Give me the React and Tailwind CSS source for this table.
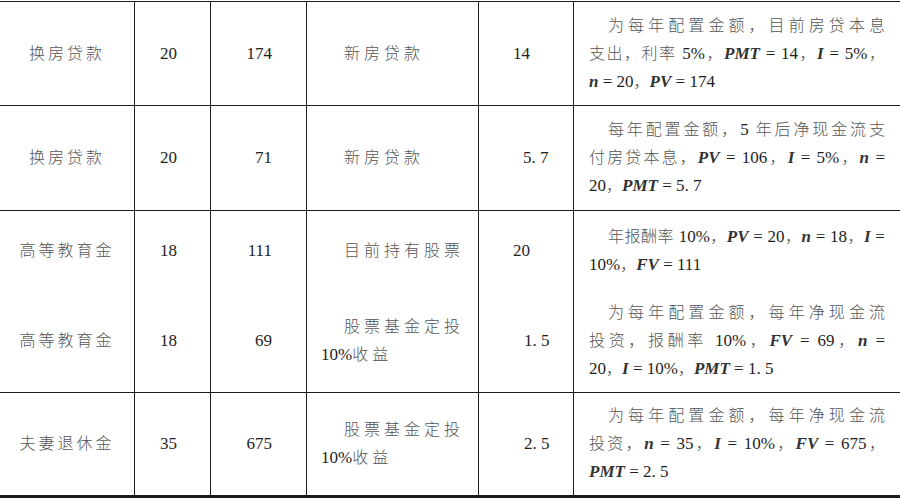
const rows = [
  {
    h: 'h-[104px]', top: true,
    name: '换房贷款', years: '20', target: '174',
    tool: ['新房贷款'], amount: '14', amountPad: 'pl-[34px]',
    note: ['为每年配置金额，目前房贷本息', '支出，利率 5%，*PMT* = 14，*I* = 5%，', '*n* = 20，*PV* = 174'],
  },
  {
    h: 'h-[105px]', top: true,
    name: '换房贷款', years: '20', target: '71',
    tool: ['新房贷款'], amount: '5. 7', amountPad: 'pl-[44px]',
    note: ['每年配置金额，5 年后净现金流支', '付房贷本息，*PV* = 106，*I* = 5%，*n* =', '20，*PMT* = 5. 7'],
  },
  {
    h: 'h-[80px]', top: true,
    name: '高等教育金', years: '18', target: '111',
    tool: ['目前持有股票'], amount: '20', amountPad: 'pl-[34px]',
    note: ['年报酬率 10%，*PV* = 20，*n* = 18，*I* =', '10%，*FV* = 111'],
  },
  {
    h: 'h-[102px]', top: false,
    name: '高等教育金', years: '18', target: '69',
    tool: ['股票基金定投', '10%收益'], amount: '1. 5', amountPad: 'pl-[45px]',
    note: ['为每年配置金额，每年净现金流', '投资，报酬率 10%，*FV* = 69，*n* =', '20，*I* = 10%，*PMT* = 1. 5'],
  },
  {
    h: 'h-[103px]', top: true,
    name: '夫妻退休金', years: '35', target: '675',
    tool: ['股票基金定投', '10%收益'], amount: '2. 5', amountPad: 'pl-[45px]',
    note: ['为每年配置金额，每年净现金流', '投资，*n* = 35，*I* = 10%，*FV* = 675，', '*PMT* = 2. 5'],
  },
]

// split a plain run into CJK / latin spans
function Runs({ text, cjk }) {
  return text.split(/([\u3000-\u303f\u4e00-\u9fff\uff00-\uffef]+)/).map((p, i) =>
    i % 2
      ? <span key={i} className={`text-[16px] font-light text-[#555] ${cjk}`}>{p}</span>
      : <span key={i} className="text-[17px] text-[#1e1e1e]">{p}</span>
  )
}

// *x* marks an italic variable
function Rich({ text, cjk = '' }) {
  return text.split('*').map((p, i) =>
    i % 2
      ? <span key={i} className="text-[17px] italic font-bold text-[#333]">{p}</span>
      : <Runs key={i} text={p} cjk={cjk} />
  )
}

function Row({ r }) {
  return (
    <div className={`grid grid-cols-[134px_76px_96px_172px_95px_1fr] ${r.h} ${r.top ? 'border-t border-[#1c1c1c]' : ''}`}>
      <div className="flex items-center justify-center">
        <Rich text={r.name} cjk="tracking-[3px]" />
      </div>
      <div className="flex items-center justify-end pr-[33px] border-l border-[#1c1c1c]">
        <Rich text={r.years} />
      </div>
      <div className="flex items-center justify-end pr-[34px] border-l border-[#1c1c1c]">
        <Rich text={r.target} />
      </div>
      <div className="flex flex-col justify-center pl-[14px] leading-[28px] border-l border-[#1c1c1c]">
        {r.tool.map((t, i) => (
          <div key={i} className={i === 0 ? 'pl-[23px]' : ''}>
            <Rich text={t} cjk="tracking-[4px]" />
          </div>
        ))}
      </div>
      <div className={`flex items-center ${r.amountPad} border-l border-[#1c1c1c]`}>
        <Rich text={r.amount} />
      </div>
      <div className="flex flex-col justify-center pl-[15px] pr-[15px] leading-[28px] border-l border-[#1c1c1c]">
        {r.note.map((t, i) => {
          const last = i === r.note.length - 1
          return (
            <div key={i} className={`${i === 0 ? 'pl-[19px]' : ''} ${last ? 'text-left' : 'text-justify [text-align-last:justify]'} whitespace-nowrap`}>
              <Rich text={t} />
            </div>
          )
        })}
      </div>
    </div>
  )
}

export default function App() {
  return (
    <div className="w-[900px] h-[498px] bg-white pt-[1px] overflow-hidden font-['Liberation_Serif','Noto_Sans_CJK_SC',serif]">
      <div className="border-b-[3px] border-[#1c1c1c]">
        {rows.map((r, i) => <Row key={i} r={r} />)}
      </div>
    </div>
  )
}
